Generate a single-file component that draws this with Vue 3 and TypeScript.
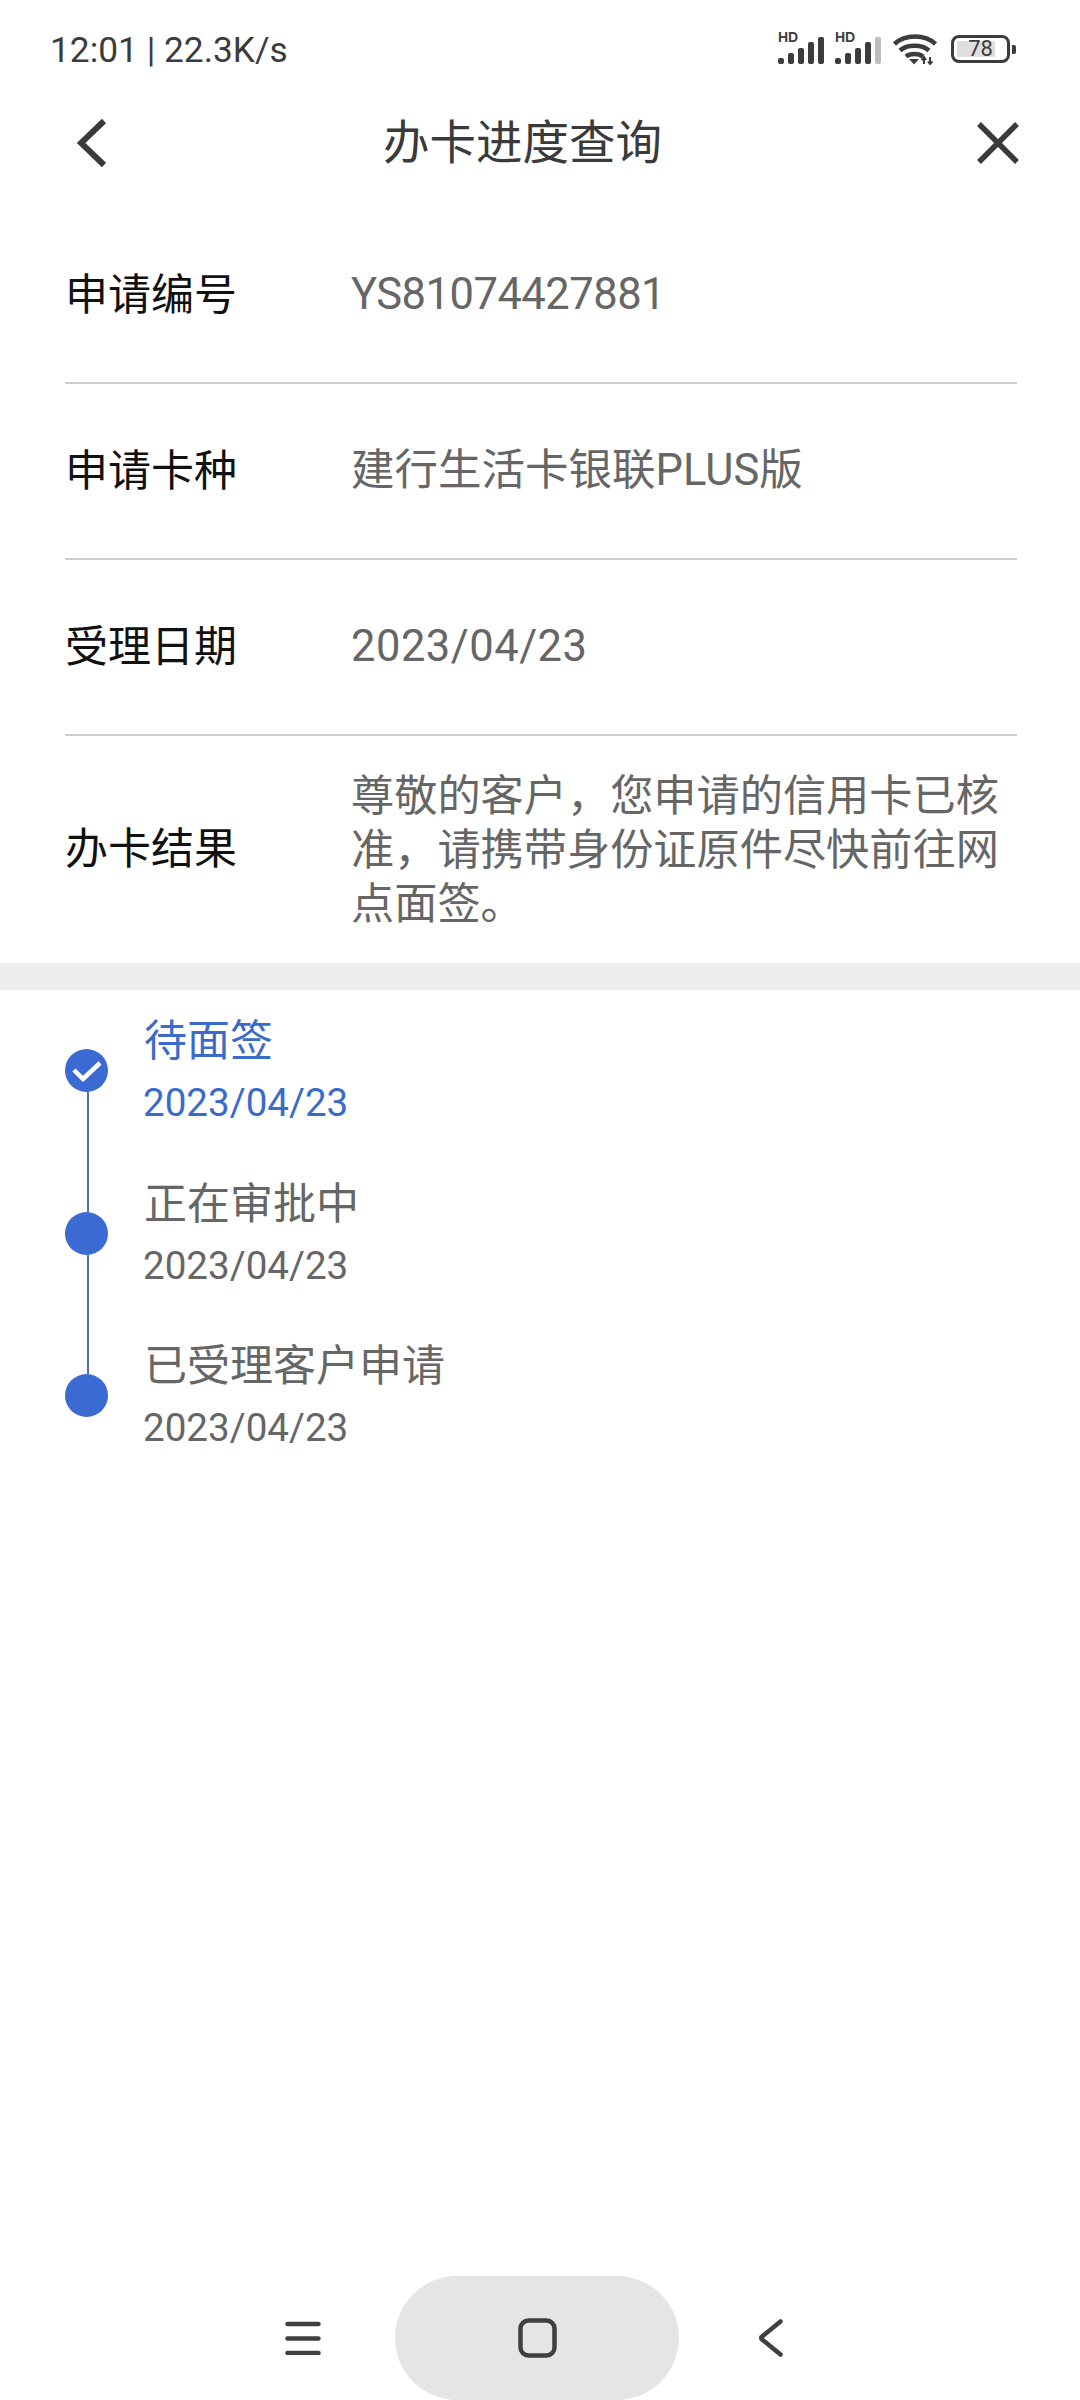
<script setup lang="ts">
interface Row { label: string; value: string; kind?: string }
interface Step { title: string; date: string; done?: boolean }
const rows: Row[] = [
  { label: '申请编号', value: 'YS81074427881', kind: 'code' },
  { label: '申请卡种', value: '建行生活卡银联PLUS版' },
  { label: '受理日期', value: '2023/04/23', kind: 'date' },
  { label: '办卡结果', value: '尊敬的客户，您申请的信用卡已核准，请携带身份证原件尽快前往网点面签。', kind: 'long' },
]
const steps: Step[] = [
  { title: '待面签', date: '2023/04/23', done: true },
  { title: '正在审批中', date: '2023/04/23' },
  { title: '已受理客户申请', date: '2023/04/23' },
]
const bars = [
  { x: 0, h: 6 }, { x: 10, h: 11 }, { x: 20, h: 16 }, { x: 30, h: 22 }, { x: 40, h: 27 },
]
</script>

<template>
  <div class="page">
    <div class="status">
      <span class="clock">12:01 | 22.3K/s</span>
      <div class="status-icons">
        <div v-for="n in 2" :key="n" class="signal">
          <span class="hd">HD</span>
          <svg width="46" height="28" viewBox="0 0 46 28">
            <rect
              v-for="(b, i) in bars"
              :key="i"
              :x="b.x"
              :y="27 - b.h"
              width="6"
              :height="b.h"
              rx="2"
              :fill="n === 2 && i === 4 ? '#bdbdbd' : '#3c3c3c'"
            />
          </svg>
        </div>
        <svg class="wifi" width="44" height="31" viewBox="0 0 44 31" fill="none" stroke="#3c3c3c" stroke-width="4.500">
          <path d="M1.500 10 C12 0 32 0 42.500 10" />
          <path d="M7 16.500 C14 10 29 10 36 16.500" />
          <path d="M13 22.500 C17 19 26 19 30 22.500" />
          <path d="M16 25 L21 30.500 L26 25 Z" fill="#3c3c3c" stroke="none" />
          <path d="M31 30 V23.500 M28.500 26 L31 23 L33 26 M37 23 V30 M35 27.500 L37 30 L39.500 27.500" stroke-width="2" />
        </svg>
        <div class="battery">
          <div class="battery-body">
            <div class="battery-fill"></div>
            <span class="battery-num">78</span>
          </div>
          <div class="battery-nub"></div>
        </div>
      </div>
    </div>

    <div class="nav">
      <svg width="30" height="50" viewBox="0 0 30 50" fill="none" stroke="#3a3a3a" stroke-width="6">
        <path d="M27 3 L4 25 L27 47" />
      </svg>
      <span class="title">办卡进度查询</span>
      <svg width="42" height="42" viewBox="0 0 42 42" fill="none" stroke="#3a3a3a" stroke-width="5.500">
        <path d="M2 2 L40 40 M40 2 L2 40" />
      </svg>
    </div>

    <div class="info">
      <div v-for="(r, i) in rows" :key="r.label" class="row" :class="{ tall: i === 3 }">
        <span class="label">{{ r.label }}</span>
        <span class="value" :class="r.kind">{{ r.value }}</span>
      </div>
    </div>

    <div class="band"></div>

    <div class="timeline">
      <div v-for="(s, i) in steps" :key="s.title" class="step" :class="{ active: s.done }">
        <div class="rail">
          <div class="line top" :class="{ hidden: i === 0 }"></div>
          <div class="dot">
            <svg v-if="s.done" width="30" height="22" viewBox="0 0 30 22" fill="none" stroke="#fff" stroke-width="4.500">
              <path d="M2 10 L11 19 L28 3" />
            </svg>
          </div>
          <div class="line bottom" :class="{ hidden: i === steps.length - 1 }"></div>
        </div>
        <div class="step-text">
          <div class="step-title">{{ s.title }}</div>
          <div class="step-date">{{ s.date }}</div>
        </div>
      </div>
    </div>

    <div class="spacer"></div>

    <div class="sysnav">
      <svg width="36" height="34" viewBox="0 0 36 34" stroke="#404040" stroke-width="4.500" stroke-linecap="round">
        <path d="M2.500 3 H33.500 M2.500 17.500 H33.500 M2.500 32 H33.500" />
      </svg>
      <div class="pill">
        <svg width="39" height="40" viewBox="0 0 39 40" fill="none" stroke="#404040" stroke-width="4.500">
          <rect x="2.500" y="2.500" width="34" height="35" rx="8" />
        </svg>
      </div>
      <svg width="24" height="38" viewBox="0 0 24 38" fill="none" stroke="#404040" stroke-width="4.500" stroke-linecap="round" stroke-linejoin="round">
        <path d="M21.500 2.500 L2.500 18 Q2 19 2.500 20 L21.500 35.500" />
      </svg>
    </div>
  </div>
</template>

<style>
html, body { margin: 0; background: #fff; }
</style>

<style scoped>
.page {
  width: 1080px;
  height: 2400px;
  display: flex;
  flex-direction: column;
  background: #fff;
  overflow: hidden;
  font-family: Roboto, "Noto Sans CJK SC", sans-serif;
}
.status {
  height: 86px;
  display: flex;
  align-items: center;
  justify-content: space-between;
  padding: 0 64px 0 50px;
  box-sizing: border-box;
  flex: none;
}
.clock {
  font-size: 35.300px;
  color: #3c3c3c;
  line-height: 40px;
  margin-top: 14px;
}
.status-icons {
  display: flex;
  align-items: flex-end;
  height: 32px;
  margin-top: 12px;
}
.signal {
  position: relative;
  width: 46px;
  height: 30px;
  margin-right: 11px;
}
.signal:nth-child(2) { margin-right: 12px; }
.signal svg { position: absolute; left: 0; bottom: 0; }
.hd {
  position: absolute;
  left: 0;
  top: -4px;
  font-family: "Liberation Sans", sans-serif;
  font-weight: 700;
  font-size: 14px;
  line-height: 13px;
  color: #3c3c3c;
}
.wifi { margin-right: 14px; }
.battery { display: flex; align-items: center; margin-bottom: 2px; }
.battery-body {
  position: relative;
  width: 59px;
  height: 28px;
  box-sizing: border-box;
  border: 3px solid #3c3c3c;
  border-radius: 8px;
  display: flex;
  align-items: center;
  justify-content: center;
}
.battery-fill {
  position: absolute;
  left: 3px;
  top: 3px;
  bottom: 3px;
  width: 38px;
  background: #dedede;
  border-radius: 2px;
}
.battery-num {
  position: relative;
  font-size: 22px;
  line-height: 22px;
  color: #3c3c3c;
}
.battery-nub {
  width: 4px;
  height: 9px;
  background: #3c3c3c;
  border-radius: 0 2px 2px 0;
  margin-left: 2px;
}
.nav {
  height: 114px;
  display: flex;
  align-items: center;
  padding-left: 77px;
  flex: none;
}
.title {
  font-size: 46.500px;
  line-height: 60px;
  color: #3a3a3a;
  margin-left: 276px;
  margin-right: auto;
}
.nav svg:last-child { margin-right: 61px; }
.info {
  padding: 8px 63px 0 65px;
  flex: none;
}
.row {
  height: 176px;
  box-sizing: border-box;
  border-bottom: 2px solid #cdcdcd;
  display: flex;
  align-items: center;
}
.row.tall { height: 227px; border-bottom: none; }
.label {
  width: 287px;
  flex: none;
  font-size: 43px;
  color: #111;
  line-height: 55px;
}
.value {
  font-size: 43.500px;
  line-height: 54px;
  color: #666;
  margin-left: -1px;
}
.value.code { letter-spacing: -0.5px; }
.value.date { letter-spacing: 0.5px; }
.value.long { font-size: 43.200px; padding-top: 2px; }
.band {
  height: 27px;
  background: #ededed;
  flex: none;
}
.timeline {
  padding: 21px 0 0 65px;
  flex: none;
}
.step {
  display: flex;
  height: 162.500px;
}
.rail {
  width: 43px;
  flex: none;
  display: flex;
  flex-direction: column;
  align-items: center;
  margin-right: 36px;
}
.line {
  width: 2px;
  background: #4d72ab;
  margin-left: 3px;
}
.line.top { height: 38px; flex: none; }
.line.bottom { flex: 1; }
.line.hidden { background: transparent; }
.dot {
  width: 43px;
  height: 43px;
  flex: none;
  border-radius: 50%;
  background: #3b6bd2;
  display: flex;
  align-items: center;
  justify-content: center;
}
.step-text { color: #666; }
.step-title {
  font-size: 43px;
  line-height: 61px;
}
.step-date {
  font-size: 38.600px;
  line-height: 61px;
  margin-left: -1px;
}
.step.active .step-text { color: #3b6bc8; }
.spacer { flex: 1; }
.sysnav {
  height: 124px;
  display: flex;
  align-items: center;
  padding-left: 285px;
  flex: none;
}
.pill {
  width: 284px;
  height: 124px;
  border-radius: 62px;
  background: #e5e5e5;
  display: flex;
  align-items: center;
  justify-content: center;
  margin: 0 80px 0 74px;
}
</style>
